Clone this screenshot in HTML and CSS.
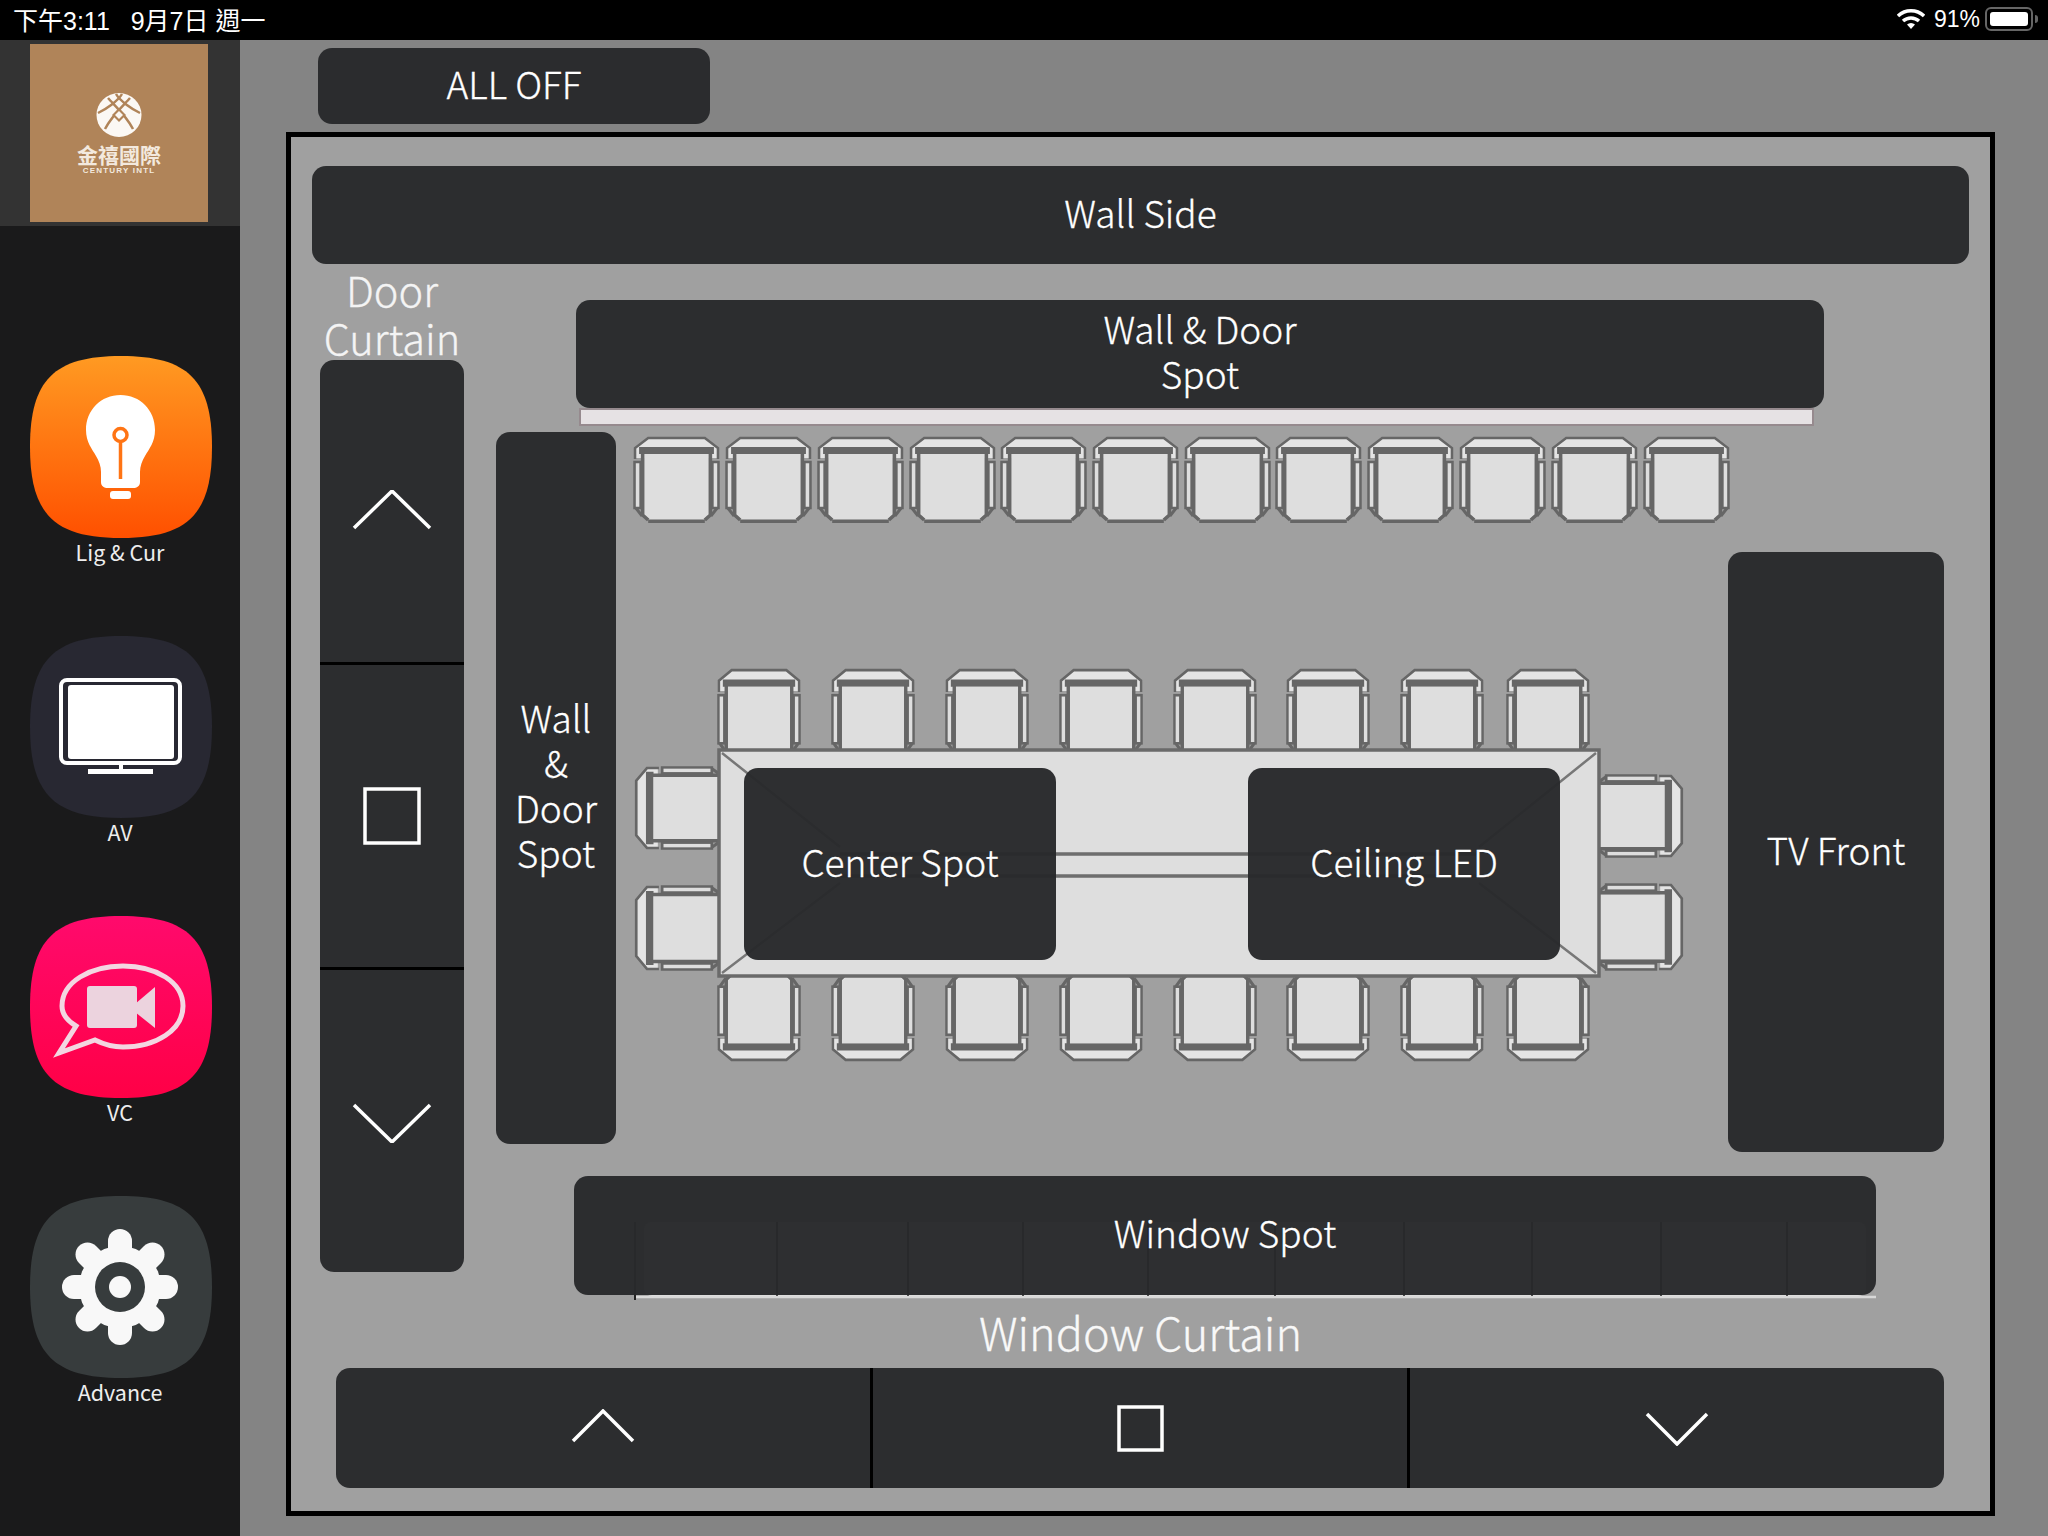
FILE: index.html
```html
<!DOCTYPE html>
<html lang="zh-Hant">
<head>
  <meta charset="UTF-8">
  <title>Lig &amp; Cur</title>
  <link rel="stylesheet" href="styles.css">
</head>
<body>

  <!-- status bar -->
  <div class="status">
    <span class="status-time">下午3:11&nbsp;&nbsp; 9月7日 週一</span>
    <div class="status-right">
      <svg class="wifi" width="28" height="22" viewBox="0 0 28 22">
        <path d="M1 8 A19 19 0 0 1 27 8" />
        <path d="M6 13 A12 12 0 0 1 22 13" />
        <path d="M14 21 L10 16.5 A6 6 0 0 1 18 16.5 Z" class="wifi-dot" />
      </svg>
      <span>91%</span>
      <div class="battery"><div class="battery-fill"></div></div>
      <div class="battery-nub"></div>
    </div>
  </div>

  <div class="app">
    <div class="sidebar">
      <div class="logo-block">
        <div class="logo">
          <svg class="logo-mark" width="46" height="44" viewBox="0 0 46 44">
            <ellipse cx="23" cy="22" rx="22.500" ry="22" fill="#fbf8f4" />
            <g stroke="#b08459" stroke-width="2.500" fill="none">
              <path d="M12 5 C18 12 30 22 37 36" />
              <path d="M20 1 C24 8 36 16 44 20" />
              <path d="M34 5 C28 12 16 22 9 36" />
              <path d="M26 1 C22 8 10 16 2 20" />
            </g>
            <path d="M23 15 L30 22 L23 29 L16 22 Z" fill="#b08459" />
            <path d="M23 18 L27 22 L23 26 L19 22 Z" fill="#fbf8f4" />
          </svg>
          <div class="logo-cn">金禧國際</div>
          <div class="logo-en">CENTURY INTL</div>
        </div>
      </div>

      <div class="nav">
        <div class="nav-item">
          <svg class="tile" viewBox="0 0 182 182">
            <defs>
              <linearGradient id="orange" x1="0" y1="0" x2="0" y2="1">
                <stop offset="0" stop-color="#ff9a22" />
                <stop offset="1" stop-color="#ff5000" />
              </linearGradient>
              <linearGradient id="pink" x1="0" y1="0" x2="0" y2="1">
                <stop offset="0" stop-color="#ff0a6c" />
                <stop offset="1" stop-color="#ff0046" />
              </linearGradient>
              <path id="squircle" d="M91 0 C158 0 182 24 182 91 C182 158 158 182 91 182 C24 182 0 158 0 91 C0 24 24 0 91 0 Z" />
            </defs>
            <use href="#squircle" fill="url(#orange)" />
            <path d="M90.500 39 C71 39 56 54 56 74 C56 86 62 93 66 100 C69 105 71 110 71 116 V126 C71 130 74 132 78 132 H103 C107 132 110 130 110 126 V116 C110 110 112 105 115 100 C119 93 125 86 125 74 C125 54 110 39 90.500 39 Z" fill="#fff" />
            <rect x="80" y="135" width="21" height="8" rx="3" fill="#fff" />
            <circle cx="90.500" cy="79" r="6.500" fill="#fff" stroke="#ff7414" stroke-width="3.500" />
            <path d="M90.500 86 V123" stroke="#ff7414" stroke-width="3.500" />
          </svg>
          <div class="nav-label">Lig &amp; Cur</div>
        </div>

        <div class="nav-item">
          <svg class="tile" viewBox="0 0 182 182">
            <use href="#squircle" fill="#282832" />
            <rect x="31" y="44" width="119" height="83" rx="6" fill="none" stroke="#fff" stroke-width="4" />
            <rect x="38" y="49" width="106" height="74" rx="3" fill="#fff" />
            <rect x="89" y="129" width="4" height="5" fill="#fff" />
            <rect x="58" y="133" width="65" height="5" fill="#fff" />
          </svg>
          <div class="nav-label">AV</div>
        </div>

        <div class="nav-item">
          <svg class="tile" viewBox="0 0 182 182">
            <use href="#squircle" fill="url(#pink)" />
            <path d="M46 110 C36 104 32 97 32 90 C32 66 60 50 93 50 C126 50 153 66 153 90 C153 114 126 131 93 131 C82 131 73 128 65 124 L29 137 Z" fill="none" stroke="#f3d6e1" stroke-width="5" stroke-linejoin="miter" />
            <rect x="57" y="70" width="50" height="42" rx="3" fill="#ecd3de" />
            <path d="M105 88 L125 71 V112 L105 96 Z" fill="#ecd3de" />
          </svg>
          <div class="nav-label">VC</div>
        </div>

        <div class="nav-item">
          <svg class="tile" viewBox="0 0 182 182">
            <use href="#squircle" fill="#373c3d" />
            <g stroke="#f8f8f8" stroke-width="24" stroke-linecap="round">
              <path d="M90 45 V137" />
              <path d="M44 91 H136" />
              <path d="M57.500 58.500 L122.500 123.500" />
              <path d="M122.500 58.500 L57.500 123.500" />
            </g>
            <circle cx="90" cy="91" r="41" fill="#f8f8f8" />
            <circle cx="90" cy="91" r="25" fill="#373c3d" />
            <circle cx="90" cy="91" r="11" fill="#f8f8f8" />
          </svg>
          <div class="nav-label">Advance</div>
        </div>
      </div>
    </div>

    <div class="main">
      <div class="top-row">
        <button class="btn all-off">ALL OFF</button>
      </div>

      <div class="frame">
        <!-- room drawing, in page coordinates -->
        <svg class="room" viewBox="291 137 1699 1374">
          <defs>
            <symbol id="chair" viewBox="0 0 88 88" preserveAspectRatio="none">
              <path d="M3 23 V13 L16 3 H72 L85 13 V23 Z" fill="#e4e4e4" />
              <path d="M3 24 V13 L16 3 H72 L85 13 V24" fill="none" stroke="#666" stroke-width="2.500" />
              <path d="M7 15.500 H81" stroke="#666" stroke-width="7" />
              <path d="M12 19 H76 V80 L71 84 H17 L12 80 Z" fill="#dedede" />
              <path d="M10.500 14 V80 L16 85 M77.500 14 V80 L72 85" fill="none" stroke="#666" stroke-width="3.500" />
              <path d="M16 86.500 H72" stroke="#666" stroke-width="3" />
              <path d="M3 72 L10 81 M85 72 L78 81" stroke="#666" stroke-width="3" />
              <rect x="2.500" y="27" width="6" height="46" fill="#dedede" stroke="#666" stroke-width="2.500" />
              <rect x="79.500" y="27" width="6" height="46" fill="#dedede" stroke="#666" stroke-width="2.500" />
            </symbol>
          </defs>

          <!-- strip under the top button -->
          <rect x="580" y="409" width="1233" height="16" fill="#e6e2e4" stroke="#968a8e" stroke-width="2" />

          <!-- back row -->
          <use href="#chair" x="632" y="435" width="89" height="88" />
          <use href="#chair" x="724" y="435" width="89" height="88" />
          <use href="#chair" x="816" y="435" width="89" height="88" />
          <use href="#chair" x="908" y="435" width="89" height="88" />
          <use href="#chair" x="999" y="435" width="89" height="88" />
          <use href="#chair" x="1091" y="435" width="89" height="88" />
          <use href="#chair" x="1183" y="435" width="89" height="88" />
          <use href="#chair" x="1274" y="435" width="89" height="88" />
          <use href="#chair" x="1366" y="435" width="89" height="88" />
          <use href="#chair" x="1458" y="435" width="89" height="88" />
          <use href="#chair" x="1550" y="435" width="89" height="88" />
          <use href="#chair" x="1642" y="435" width="89" height="88" />

          <!-- table chairs, upper side -->
          <use href="#chair" x="716" y="667" width="86" height="92" />
          <use href="#chair" x="830" y="667" width="86" height="92" />
          <use href="#chair" x="944" y="667" width="86" height="92" />
          <use href="#chair" x="1058" y="667" width="86" height="92" />
          <use href="#chair" x="1172" y="667" width="86" height="92" />
          <use href="#chair" x="1285" y="667" width="86" height="92" />
          <use href="#chair" x="1399" y="667" width="86" height="92" />
          <use href="#chair" x="1505" y="667" width="86" height="92" />

          <!-- table chairs, lower side -->
          <use href="#chair" width="86" height="92" transform="translate(716 1063) scale(1 -1)" />
          <use href="#chair" width="86" height="92" transform="translate(830 1063) scale(1 -1)" />
          <use href="#chair" width="86" height="92" transform="translate(944 1063) scale(1 -1)" />
          <use href="#chair" width="86" height="92" transform="translate(1058 1063) scale(1 -1)" />
          <use href="#chair" width="86" height="92" transform="translate(1172 1063) scale(1 -1)" />
          <use href="#chair" width="86" height="92" transform="translate(1285 1063) scale(1 -1)" />
          <use href="#chair" width="86" height="92" transform="translate(1399 1063) scale(1 -1)" />
          <use href="#chair" width="86" height="92" transform="translate(1505 1063) scale(1 -1)" />

          <!-- table ends -->
          <use href="#chair" width="86" height="95" transform="translate(633 851) rotate(-90)" />
          <use href="#chair" width="88" height="95" transform="translate(633 972) rotate(-90)" />
          <use href="#chair" width="86" height="95" transform="translate(1685 773) rotate(90)" />
          <use href="#chair" width="90" height="95" transform="translate(1685 882) rotate(90)" />

          <!-- table -->
          <rect x="719" y="750" width="880" height="226" fill="#dedede" stroke="#6a6a6a" stroke-width="3.500" />
          <g stroke="#777" stroke-width="2.500" fill="none">
            <path d="M722 753 L840 847 M722 973 L840 883" />
            <path d="M1596 753 L1479 847 M1596 973 L1479 883" />
          </g>
          <path d="M840 854 H1479 M840 876 H1479" stroke="#6e6e6e" stroke-width="3.500" />

          <!-- window row, mostly under the window button -->
          <rect x="644" y="1222" width="1222" height="74" rx="8" fill="#dedede" />
          <g stroke="#222" stroke-width="2">
            <path d="M635 1222 V1300" />
            <path d="M777 1222 V1296 M908 1222 V1296 M1023 1222 V1296 M1148 1222 V1296 M1275 1222 V1296 M1404 1222 V1296 M1532 1222 V1296 M1661 1222 V1296 M1787 1222 V1296" />
          </g>
          <path d="M636 1297 H1876" stroke="#d8d8d8" stroke-width="2.500" />
        </svg>

        <button class="btn wall-side">Wall Side</button>

        <div class="plan">
          <div class="door-label">Door<br>Curtain</div>
          <div class="btn-group door-curtain">
            <button class="btn seg">
              <svg class="door-up" width="80" height="40" viewBox="0 0 80 40"><path d="M2 38 L40 1 L78 38" class="glyph" /></svg>
            </button>
            <button class="btn seg">
              <svg width="58" height="58" viewBox="0 0 58 58"><rect x="2" y="2" width="54" height="54" class="glyph" /></svg>
            </button>
            <button class="btn seg">
              <svg class="door-down" width="80" height="40" viewBox="0 0 80 40"><path d="M2 2 L40 39 L78 2" class="glyph" /></svg>
            </button>
          </div>

          <button class="btn wall-door-top">Wall &amp; Door<br>Spot</button>
          <button class="btn wall-door-left">Wall<br>&amp;<br>Door<br>Spot</button>
          <button class="btn tv-front">TV Front</button>
          <button class="btn center-spot">Center Spot</button>
          <button class="btn ceiling-led">Ceiling LED</button>
          <button class="btn window-spot">Window Spot</button>
          <div class="window-label">Window Curtain</div>
        </div>

        <div class="btn-group window-curtain">
          <button class="btn seg">
            <svg class="window-up" width="64" height="34" viewBox="0 0 64 34"><path d="M2 32 L32 2 L62 32" class="glyph" /></svg>
          </button>
          <button class="btn seg">
            <svg width="47" height="47" viewBox="0 0 47 47"><rect x="2" y="2" width="43" height="43" class="glyph" /></svg>
          </button>
          <button class="btn seg">
            <svg class="window-down" width="64" height="34" viewBox="0 0 64 34"><path d="M2 2 L32 32 L62 2" class="glyph" /></svg>
          </button>
        </div>
      </div>
    </div>
  </div>

</body>
</html>
```

FILE: styles.css
```css
* {
  box-sizing: border-box;
}
body {
  margin: 0;
  width: 2048px;
  height: 1536px;
  overflow: hidden;
  background: #000;
  font-family: "Noto Sans CJK TC", "Noto Sans", sans-serif;
  color: #fff;
}

/* status bar */
.status {
  height: 40px;
  padding: 0 10px 2px 13px;
  background: #000;
  display: flex;
  align-items: center;
  justify-content: space-between;
  font-family: "Liberation Sans", "Noto Sans CJK TC", sans-serif;
  font-size: 23px;
}
.status-time {
  font-size: 25px;
}
.status-right {
  display: flex;
  align-items: center;
}
.wifi {
  margin-right: 9px;
}
.wifi path {
  fill: none;
  stroke: #fff;
  stroke-width: 3.5;
}
.wifi .wifi-dot {
  fill: #fff;
  stroke: none;
}
.battery {
  width: 48px;
  height: 24px;
  margin-left: 5px;
  padding: 3px;
  border: 2px solid #666;
  border-radius: 6px;
}
.battery-fill {
  width: 100%;
  height: 100%;
  background: #fff;
  border-radius: 3px;
}
.battery-nub {
  width: 3px;
  height: 8px;
  margin-left: 2px;
  background: #666;
  border-radius: 0 3px 3px 0;
}

.app {
  display: flex;
  height: 1496px;
}

/* sidebar */
.sidebar {
  width: 240px;
  background: #1a1a1b;
}
.logo-block {
  height: 186px;
  padding: 4px 32px 4px 30px;
  background: #333;
}
.logo {
  height: 178px;
  padding-top: 49px;
  background: #b08459;
  display: flex;
  flex-direction: column;
  align-items: center;
}
.logo-cn {
  margin-top: 6px;
  font-size: 21px;
  line-height: 22px;
  font-weight: 700;
  color: #f3e9de;
}
.logo-en {
  margin-top: 1px;
  font-family: "Liberation Sans", sans-serif;
  font-size: 8px;
  font-weight: 700;
  line-height: 9px;
  color: #f3e9de;
  letter-spacing: 1.200px;
  white-space: nowrap;
}
.nav {
  padding-top: 130px;
  display: flex;
  flex-direction: column;
  gap: 65px;
}
.nav-item {
  height: 215px;
  display: flex;
  flex-direction: column;
  align-items: center;
}
.tile {
  width: 182px;
  height: 182px;
  margin-left: 2px;
  flex: none;
}
.nav-label {
  height: 33px;
  line-height: 27px;
  font-size: 21.500px;
  color: #eee;
}

/* main area */
.main {
  flex: 1;
  padding: 8px 53px 20px 46px;
  background: #848484;
}
.top-row {
  display: flex;
  padding-left: 32px;
}
.btn {
  border: none;
  padding: 0 0 6px;
  background: rgba(40, 41, 43, 0.97);
  color: #fff;
  border-radius: 14px;
  font-family: "Noto Sans CJK TC", "Noto Sans", sans-serif;
  font-size: 37px;
  font-weight: 300;
  line-height: 45px;
  -webkit-text-stroke: 0.3px #fff;
}
.all-off {
  width: 392px;
  height: 76px;
}
.frame {
  position: relative;
  height: 1384px;
  margin-top: 8px;
  padding-top: 29px;
  border: 5px solid #000;
  background: #a0a0a0;
}
.room {
  position: absolute;
  left: 0;
  top: 0;
  width: 1699px;
  height: 1374px;
}
.wall-side {
  position: relative;
  display: block;
  width: 1657px;
  height: 98px;
  margin-left: 21px;
}

/* floor plan, buttons sit on the room drawing */
.plan {
  position: relative;
  height: 1104px;
}
.plan > .btn,
.plan > .btn-group,
.plan > div {
  position: absolute;
}
.door-label {
  left: 0;
  width: 202px;
  top: 1px;
  text-align: center;
  font-size: 41.500px;
  font-weight: 300;
  line-height: 48px;
  color: #f4f4f4;
  -webkit-text-stroke: 0.3px #f4f4f4;
}
.door-curtain {
  left: 29px;
  top: 96px;
  width: 144px;
  height: 912px;
  flex-direction: column;
}
.wall-door-top {
  left: 285px;
  top: 36px;
  width: 1248px;
  height: 108px;
}
.wall-door-left {
  left: 205px;
  top: 168px;
  width: 120px;
  height: 712px;
}
.tv-front {
  left: 1437px;
  top: 288px;
  width: 216px;
  height: 600px;
}
.center-spot {
  left: 453px;
  top: 504px;
  width: 312px;
  height: 192px;
}
.ceiling-led {
  left: 957px;
  top: 504px;
  width: 312px;
  height: 192px;
}
.window-spot {
  left: 283px;
  top: 912px;
  width: 1302px;
  height: 119px;
}
.window-label {
  left: 0;
  right: 0;
  top: 1040px;
  text-align: center;
  font-size: 45px;
  font-weight: 300;
  line-height: 56px;
  color: #f8f8f8;
  -webkit-text-stroke: 0.3px #f8f8f8;
}

/* curtain controls */
.btn-group {
  display: flex;
  border-radius: 14px;
  overflow: hidden;
}
.seg {
  flex: 1;
  display: flex;
  align-items: center;
  justify-content: center;
  padding: 0;
  border-radius: 0;
  background: #2c2d2f;
}
.door-curtain .seg + .seg {
  border-top: 3px solid #000;
}
.window-curtain .seg + .seg {
  border-left: 3px solid #000;
}
.window-curtain {
  position: relative;
  width: 1608px;
  height: 120px;
  margin-left: 45px;
}
.door-up {
  margin-bottom: 2px;
}
.door-down {
  margin-top: 3px;
}
.window-up {
  margin-bottom: 5px;
}
.window-down {
  margin-top: 2px;
}
.glyph {
  fill: none;
  stroke: #fff;
  stroke-width: 3.5;
}
```
